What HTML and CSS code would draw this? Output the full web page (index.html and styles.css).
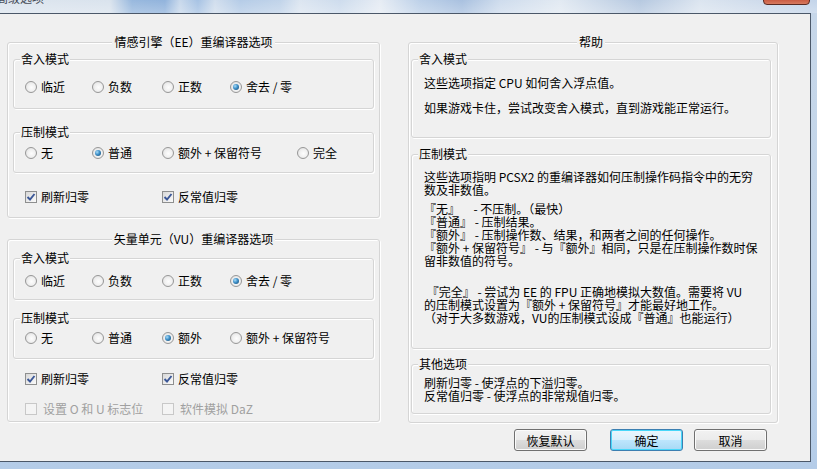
FILE: index.html
```html
<!DOCTYPE html>
<html lang="zh-CN">

<head>
    <meta charset="UTF-8">
    <title>高级选项</title>
    <link rel="stylesheet" href="styles.css">
</head>

<body>
    <div class="window">
        <div class="titlebar">
            <span class="title">高级选项</span>
            <span class="close"></span>
        </div>
        <div class="client">
            <div class="cols">
                <!-- left: recompiler options -->
                <div class="col-left">
                    <fieldset class="group ee">
                        <legend>情感引擎（EE）重编译器选项</legend>
                        <fieldset class="box ee-round">
                            <legend>舍入模式</legend>
                            <div class="opts">
                                <label class="radio"><i></i>临近</label>
                                <label class="radio"><i></i>负数</label>
                                <label class="radio"><i></i>正数</label>
                                <label class="radio on"><i></i>舍去 / 零</label>
                            </div>
                        </fieldset>
                        <fieldset class="box ee-clamp">
                            <legend>压制模式</legend>
                            <div class="opts wide3">
                                <label class="radio"><i></i>无</label>
                                <label class="radio on"><i></i>普通</label>
                                <label class="radio"><i></i>额外 + 保留符号</label>
                                <label class="radio"><i></i>完全</label>
                            </div>
                        </fieldset>
                        <div class="checks ee-checks">
                            <label class="check on"><i><svg viewBox="0 0 10 10"><path d="M1.5 5 L4 7.5 L8.5 2"/></svg></i>刷新归零</label>
                            <label class="check on"><i><svg viewBox="0 0 10 10"><path d="M1.5 5 L4 7.5 L8.5 2"/></svg></i>反常值归零</label>
                        </div>
                    </fieldset>

                    <fieldset class="group vu">
                        <legend>矢量单元（VU）重编译器选项</legend>
                        <fieldset class="box vu-round">
                            <legend>舍入模式</legend>
                            <div class="opts">
                                <label class="radio"><i></i>临近</label>
                                <label class="radio"><i></i>负数</label>
                                <label class="radio"><i></i>正数</label>
                                <label class="radio on"><i></i>舍去 / 零</label>
                            </div>
                        </fieldset>
                        <fieldset class="box vu-clamp">
                            <legend>压制模式</legend>
                            <div class="opts">
                                <label class="radio"><i></i>无</label>
                                <label class="radio"><i></i>普通</label>
                                <label class="radio on"><i></i>额外</label>
                                <label class="radio"><i></i>额外 + 保留符号</label>
                            </div>
                        </fieldset>
                        <div class="checks vu-checks">
                            <label class="check on"><i><svg viewBox="0 0 10 10"><path d="M1.5 5 L4 7.5 L8.5 2"/></svg></i>刷新归零</label>
                            <label class="check on"><i><svg viewBox="0 0 10 10"><path d="M1.5 5 L4 7.5 L8.5 2"/></svg></i>反常值归零</label>
                        </div>
                        <div class="checks vu-disabled">
                            <label class="check off"><i></i>设置 O 和 U 标志位</label>
                            <label class="check off"><i></i>软件模拟 DaZ</label>
                        </div>
                    </fieldset>
                </div>

                <!-- right: help text -->
                <div class="col-right">
                    <fieldset class="group help">
                        <legend>帮助</legend>
                        <fieldset class="box help-round">
                            <legend>舍入模式</legend>
                            <div class="txt">
                                <p>这些选项指定 CPU 如何舍入浮点值。</p>
                                <p class="gap12">如果游戏卡住，尝试改变舍入模式，直到游戏能正常运行。</p>
                            </div>
                        </fieldset>
                        <fieldset class="box help-clamp">
                            <legend>压制模式</legend>
                            <div class="txt">
                                <p>这些选项指明 PCSX2 的重编译器如何压制操作码指令中的无穷<br>数及非数值。</p>
                                <p class="gap6">『无』     - 不压制。（最快）<br>『普通』 - 压制结果。<br>『额外』 - 压制操作数、结果，和两者之间的任何操作。<br>『额外 + 保留符号』 - 与『额外』相同，只是在压制操作数时保<br>留非数值的符号。</p>
                                <p class="gap18"> 『完全』 - 尝试为 EE 的 FPU 正确地模拟大数值。需要将 VU<br>的压制模式设置为『额外 + 保留符号』才能最好地工作。<br>（对于大多数游戏，VU的压制模式设成『普通』也能运行）</p>
                            </div>
                        </fieldset>
                        <fieldset class="box help-misc">
                            <legend>其他选项</legend>
                            <div class="txt">
                                <p>刷新归零 - 使浮点的下溢归零。<br>反常值归零 - 使浮点的非常规值归零。</p>
                            </div>
                        </fieldset>
                    </fieldset>

                    <div class="buttons">
                        <button class="btn reset">恢复默认</button>
                        <button class="btn default">确定</button>
                        <button class="btn">取消</button>
                    </div>
                </div>
            </div>
        </div>
    </div>
</body>

</html>
```

FILE: styles.css
```css
html,
body {
    margin: 0;
    padding: 0;
}

body {
    font-family: "Noto Sans CJK SC", "Noto Sans", sans-serif;
    font-size: 12px;
    color: #000;
    background: #bcd2ea;
}

.window {
    width: 817px;
    height: 469px;
    overflow: hidden;
    background: linear-gradient(180deg, #c7d7e9 0%, #c2d5ea 60%, #b4cce8 100%);
}

/* aero glass strip, only the bottom of it is in the shot */
.titlebar {
    position: relative;
    height: 13px;
    overflow: hidden;
    background:
        linear-gradient(180deg, rgba(255, 255, 255, 0.15), rgba(255, 255, 255, 0.35)),
        linear-gradient(90deg, #d7e1ec 0, #d3deea 110px, #86acd8 132px, #7ea6d6 165px, #bfd2e8 180px,
            #97b8df 198px, #c9d8ea 215px, #a8c3e3 240px, #b6cce6 280px, #d6e1ee 300px,
            #c5d6ea 340px, #e2e9f2 380px, #b2c9e5 420px, #9ab6da 462px, #c6d6ea 500px,
            #dde6f0 560px, #a9bfdb 640px, #d5e0ed 700px, #c6d5e8 760px, #b9cde6 817px);
}

.title {
    display: block;
    margin: -9px 0 0 -4px;
    line-height: 14px;
    color: #1c2633;
    opacity: 0.8;
}

.close {
    position: absolute;
    left: 763px;
    top: -12px;
    width: 45px;
    height: 15px;
    border: 1px solid #5a2a22;
    border-radius: 0 0 4px 4px;
    background: linear-gradient(180deg, #e0907e, #c9583f 70%, #d67a5f);
}

.client {
    width: 811px;
    height: 449px;
    box-sizing: border-box;
    border: 1px solid #4b5869;
    border-left: 0;
    background: #f0f0f0;
    padding: 20px 0 0 7px;
}

.cols {
    display: flex;
    align-items: flex-start;
    gap: 28px;
}

.col-left {
    width: 373px;
}

.col-right {
    width: 370px;
}

/* group boxes */
fieldset {
    margin: 0;
    min-width: 0;
    border: 1px solid #d5d5d5;
    border-radius: 3px;
    box-shadow: inset 1px 1px 0 #fff, 1px 1px 0 #fff;
}

legend {
    padding: 0 1px;
    line-height: 16px;
    background: #f0f0f0;
}

.group {
    box-sizing: border-box;
    padding: 1px 5px 12px;
}

.group > legend {
    margin: 0 auto;
    padding: 0 2px;
}

.box {
    padding: 0;
}

.box > legend {
    margin-left: 6px;
}

.ee {
    width: 373px;
}

.vu {
    width: 373px;
    margin-top: 13px;
    padding-top: 3px;
    padding-bottom: 4px;
}

.help {
    width: 370px;
    padding: 1px 6px 8px 2px;
}

/* radio rows */
.opts {
    display: grid;
    grid-template-columns: 67px 70px 68px auto;
    padding-left: 11px;
}

.opts.wide3 {
    grid-template-columns: 67px 70px 135px auto;
}

.radio,
.check {
    display: flex;
    align-items: center;
    height: 16px;
    line-height: 16px;
    white-space: nowrap;
}

.radio i {
    position: relative;
    flex: none;
    width: 12px;
    height: 12px;
    box-sizing: border-box;
    margin-right: 4px;
    border: 1px solid #979797;
    border-radius: 50%;
    background: radial-gradient(circle at 55% 55%, #fdfdfd 0, #f1f1f1 45%, #d9d9d9 100%);
}

.radio.on i::after {
    content: "";
    position: absolute;
    left: 2px;
    top: 2px;
    width: 6px;
    height: 6px;
    border-radius: 50%;
    background: radial-gradient(circle at 35% 35%, #a9dcf7 0, #3d8fc8 45%, #154266 100%);
}

.ee-round .opts {
    padding-top: 12px;
    padding-bottom: 13px;
}

.ee-clamp {
    margin-top: 15px;
}

.ee-clamp .opts {
    padding-top: 5px;
    padding-bottom: 11px;
}

.vu-round .opts {
    padding-top: 7px;
    padding-bottom: 10px;
}

.vu-clamp {
    margin-top: 10px;
}

.vu-clamp .opts {
    padding-top: 4px;
    padding-bottom: 12px;
}

/* checkbox rows */
.checks {
    display: grid;
    grid-template-columns: 137px auto;
    padding-left: 12px;
}

.check i {
    flex: none;
    width: 12px;
    height: 12px;
    box-sizing: border-box;
    margin-right: 4px;
    border: 1px solid #8e8f8f;
    background: linear-gradient(135deg, #d8d8d8, #fbfbfb);
}

.check svg {
    display: block;
    width: 10px;
    height: 10px;
}

.check path {
    fill: none;
    stroke: #3b5797;
    stroke-width: 1.9;
}

.check.off {
    color: #a0a0a0;
}

.check.off i {
    margin-right: 6px;
    border-color: #c8c8c8;
    background: #f4f4f4;
}

.ee-checks {
    margin-top: 16px;
}

.vu-checks {
    margin-top: 12px;
}

.vu-disabled {
    margin-top: 14px;
}

/* help text */
.txt {
    padding-left: 12px;
}

.txt p {
    margin: 0;
    line-height: 13px;
    white-space: pre;
}

.txt .gap12 {
    margin-top: 12px;
}

.txt .gap6 {
    margin-top: 6px;
}

.txt .gap18 {
    margin-top: 18px;
}

.help-round .txt {
    padding-top: 9px;
    padding-bottom: 23px;
}

.help-clamp {
    margin-top: 8px;
}

.help-clamp .txt {
    padding-top: 8px;
    padding-bottom: 24px;
}

.help-misc {
    margin-top: 7px;
}

.help-misc .txt {
    padding-top: 4px;
    padding-bottom: 11px;
}

/* dialog buttons */
.buttons {
    display: flex;
    justify-content: flex-end;
    margin: 6px 11px 0 0;
}

.btn {
    width: 73px;
    height: 22px;
    margin-left: 11px;
    padding: 0;
    font-family: inherit;
    font-size: 12px;
    color: #000;
    border: 1px solid #707070;
    border-radius: 3px;
    box-shadow: inset 0 0 0 1px #fbfbfb;
    background: linear-gradient(180deg, #f2f2f2 0%, #ebebeb 50%, #dddddd 50%, #cfcfcf 100%);
}

.btn.reset {
    margin-right: 12px;
}

.btn.default {
    border-color: #3c7fb1;
    box-shadow: inset 0 0 0 1px #48d7f9;
    background: linear-gradient(180deg, #eaf6fd 0%, #d9f0fc 50%, #bee6fd 50%, #a7d9f5 100%);
}
```
